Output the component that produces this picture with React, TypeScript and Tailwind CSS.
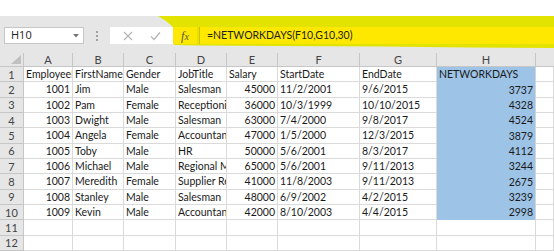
import React from "react";

const cols = ["A", "B", "C", "D", "E", "F", "G", "H"];

type Cell = { v: string; r?: boolean };

const header: Cell[] = [
  { v: "EmployeeID" },
  { v: "FirstName" },
  { v: "Gender" },
  { v: "JobTitle" },
  { v: "Salary" },
  { v: "StartDate" },
  { v: "EndDate" },
  { v: "NETWORKDAYS" },
];

const data: string[][] = [
  ["1001", "Jim", "Male", "Salesman", "45000", "11/2/2001", "9/6/2015", "3737"],
  ["1002", "Pam", "Female", "Receptionist", "36000", "10/3/1999", "10/10/2015", "4328"],
  ["1003", "Dwight", "Male", "Salesman", "63000", "7/4/2000", "9/8/2017", "4524"],
  ["1004", "Angela", "Female", "Accountant", "47000", "1/5/2000", "12/3/2015", "3879"],
  ["1005", "Toby", "Male", "HR", "50000", "5/6/2001", "8/3/2017", "4112"],
  ["1006", "Michael", "Male", "Regional Manager", "65000", "5/6/2001", "9/11/2013", "3244"],
  ["1007", "Meredith", "Female", "Supplier Relations", "41000", "11/8/2003", "9/11/2013", "2675"],
  ["1008", "Stanley", "Male", "Salesman", "48000", "6/9/2002", "4/2/2015", "3239"],
  ["1009", "Kevin", "Male", "Accountant", "42000", "8/10/2003", "4/4/2015", "2998"],
];

const rightCols = new Set([0, 4, 7]);

const gridCols = "grid grid-cols-[24px_49px_51px_52px_51px_51px_82px_77px_99px_1fr]";

function RowHeader({ n }: { n: number }) {
  return (
    <div className="h-[15.33px] bg-[#e6e6e6] border-r border-b border-[#c6c6c6] flex items-center justify-center text-[11px] text-[#444] leading-none">
      {n}
    </div>
  );
}

function DataCell({ v, right, blue }: { v: string; right?: boolean; blue?: boolean }) {
  return (
    <div
      className={
        "h-[15.33px] overflow-hidden whitespace-nowrap flex items-center text-[10.5px] leading-none text-[#1a1a1a] px-[2px] " +
        (right ? "justify-end " : "justify-start ") +
        (blue ? "bg-[#9dc3e6] border-r border-[#d4d4d4]" : "border-r border-b border-[#dadada]")
      }
    >
      {v}
    </div>
  );
}

export default function App() {
  return (
    <div
      className="w-[554px] h-[251px] overflow-hidden bg-white relative"
      style={{ fontFamily: "Lato, 'Open Sans', sans-serif" }}
    >
      <div className="h-[16px] bg-white" />
      {/* toolbar */}
      <div className="relative h-[37px] bg-[#e6e6e6]">
        <svg className="absolute left-0 top-0" width="554" height="37" viewBox="0 16 554 37">
          <polygon
            points="158,16 554,16 554,48 470,47.5 380,46.5 280,46 200,45.5 174,45 172,26 166,21"
            fill="#e3e300"
          />
        </svg>
        <div className="relative flex items-start pt-[11px] pl-[4px] h-full">
          <div className="w-[80px] h-[17px] bg-white border border-[#c6c6c6] flex items-center pl-[6px] pr-[4px] justify-between">
            <span className="text-[11px] text-[#222]" style={{ fontFamily: "'Open Sans', Lato, sans-serif" }}>
              H10
            </span>
            <svg width="6" height="4" viewBox="0 0 6 4">
              <polygon points="0,0 6,0 3,3.5" fill="#777" />
            </svg>
          </div>
          <div className="w-[26px] h-[17px] flex flex-col items-center justify-center gap-[2px]">
            <div className="w-[2px] h-[2px] bg-[#a0a0a0]" />
            <div className="w-[2px] h-[2px] bg-[#a0a0a0]" />
            <div className="w-[2px] h-[2px] bg-[#a0a0a0]" />
          </div>
          <div className="w-[63px] h-[17px] bg-white flex items-center justify-around px-[4px]">
            <svg width="10" height="10" viewBox="0 0 10 10">
              <path d="M1 1 L9 9 M9 1 L1 9" stroke="#b5b5b5" strokeWidth="1.2" />
            </svg>
            <svg width="11" height="10" viewBox="0 0 11 10">
              <path d="M1 5.5 L4 8.5 L10 1.5" stroke="#b5b5b5" strokeWidth="1.2" fill="none" />
            </svg>
          </div>
          <div className="w-[24px] h-[17px] bg-[#ffe800] flex items-center justify-center">
            <span
              className="italic text-[12px] text-[#555] leading-none"
              style={{ fontFamily: "'Liberation Serif', serif" }}
            >
              f<span className="text-[10px]">x</span>
            </span>
          </div>
          <div className="ml-[2px] flex-1 h-[17px] bg-[#ffe800] border-l border-[#d0c000] flex items-center pl-[7px]">
            <span className="text-[10.5px] text-[#222]">=NETWORKDAYS(F10,G10,30)</span>
          </div>
        </div>
      </div>
      {/* column headers */}
      <div className={gridCols + " h-[14px] bg-[#e6e6e6]"}>
        <div className="border-r border-b border-[#c6c6c6] relative">
          <svg className="absolute right-[2px] bottom-[2px]" width="10" height="9" viewBox="0 0 10 9">
            <polygon points="10,0 10,9 0,9" fill="#c0c0c0" />
          </svg>
        </div>
        {cols.map((c) => (
          <div
            key={c}
            className="border-r border-b border-[#c6c6c6] flex items-center justify-center text-[11px] text-[#444] leading-none"
          >
            {c}
          </div>
        ))}
        <div className="border-b border-[#c6c6c6]" />
      </div>
      {/* rows */}
      <div className={gridCols}>
        <RowHeader n={1} />
        {header.map((h, i) => (
          <DataCell key={i} v={h.v} blue={i === 7} />
        ))}
        <DataCell v="" />
        {data.map((row, ri) => (
          <React.Fragment key={ri}>
            <RowHeader n={ri + 2} />
            {row.map((v, ci) => (
              <DataCell key={ci} v={v} right={rightCols.has(ci)} blue={ci === 7} />
            ))}
            <DataCell v="" />
          </React.Fragment>
        ))}
        {[11, 12].map((n) => (
          <React.Fragment key={n}>
            <RowHeader n={n} />
            {Array.from({ length: 9 }).map((_, i) => (
              <DataCell key={i} v="" />
            ))}
          </React.Fragment>
        ))}
      </div>
    </div>
  );
}
